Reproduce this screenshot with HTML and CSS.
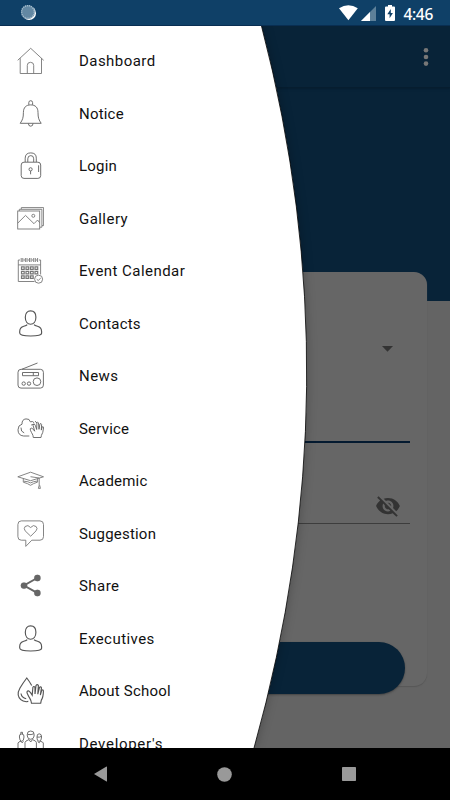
FILE: index.html
```html
<!DOCTYPE html>
<html lang="en">
  <head>
    <meta charset="UTF-8" />
    <meta name="viewport" content="width=device-width, initial-scale=1" />
    <title>School App</title>
    <link rel="stylesheet" href="styles.css">
  </head>
  <body>
    <header class="status">
      <svg class="sync" width="18" height="18" viewBox="0 0 18 18">
        <circle cx="9.1" cy="9.2" r="6.9" fill="#fff" />
        <circle cx="7.9" cy="8" r="6.9" fill="#6388a3" />
        <circle cx="7.9" cy="8" r="6.3" fill="none" stroke="#a9bfce" stroke-width="1.4" stroke-dasharray="1 1" />
      </svg>
      <div class="status-right">
        <svg width="19" height="16" viewBox="0 0 19 16"><path d="M0 3.3Q9.4-2.6 18.8 3.3L9.4 15.3Z" fill="#fff" /></svg>
        <svg class="signal" width="15" height="15" viewBox="0 0 15 15">
          <path d="M0 15L15 0V15Z" fill="#5d8099" />
          <path d="M0 15L9 6V15Z" fill="#fff" />
        </svg>
        <svg class="battery" width="10" height="16" viewBox="0 0 10 16">
          <path d="M3 0H7V1.5H9Q10 1.5 10 2.5V15Q10 16 9 16H1Q0 16 0 15V2.5Q0 1.5 1 1.5H3Z" fill="#fff" />
          <path d="M5.8 4L2.3 9.3H4.6V13.3L7.9 8H5.8Z" fill="#0f4067" />
        </svg>
        <span class="clock">4:46</span>
      </div>
    </header>

    <main class="screen">
      <div class="appbar">
        <svg width="6" height="20" viewBox="0 0 6 20" fill="#777"><circle cx="3" cy="3.3" r="2.3" /><circle cx="3" cy="10" r="2.3" /><circle cx="3" cy="16.6" r="2.3" /></svg>
      </div>
      <div class="card">
        <div class="field select">
          <svg width="11" height="6" viewBox="0 0 11 6"><path d="M0 0H11L5.5 5.7Z" fill="#333" /></svg>
        </div>
        <div class="field user"></div>
        <div class="field password">
          <svg width="26" height="26" viewBox="0 0 24 24" fill="#333"><path d="M12 7c2.76 0 5 2.24 5 5 0 .65-.13 1.26-.36 1.83l2.92 2.92c1.51-1.26 2.7-2.89 3.43-4.75-1.73-4.39-6-7.5-11-7.5-1.4 0-2.74.25-3.98.7l2.16 2.16C10.74 7.13 11.35 7 12 7zM2 4.27l2.28 2.28.46.46C3.08 8.3 1.78 10.02 1 12c1.73 4.39 6 7.5 11 7.5 1.55 0 3.03-.3 4.38-.84l.42.42L19.73 22 21 20.73 3.27 3 2 4.27zM7.53 9.8l1.55 1.55c-.05.21-.08.43-.08.65 0 1.66 1.34 3 3 3 .22 0 .44-.03.65-.08l1.55 1.55c-.67.33-1.41.53-2.2.53-2.76 0-5-2.24-5-5 0-.79.2-1.53.53-2.2zm4.31-.78l3.15 3.15.02-.16c0-1.66-1.34-3-3-3l-.17.01z" /></svg>
        </div>
        <div class="submit"></div>
      </div>

      <nav class="drawer">
        <svg class="drawer-shape" width="330" height="722" viewBox="0 0 330 722">
          <path d="M0 0H261.5Q355.5 360 254 722H0Z" fill="#fff" />
          <path d="M261.5 0Q355.5 360 254 722" fill="none" stroke="#000" stroke-width=".8" />
        </svg>
        <ul class="menu">
          <li>
            <svg class="icon" viewBox="0 0 27 27"><path d="M.7 13.3L13.7 1.3L26.7 13.3M3.2 11.2V26.5H24.5V11.2M10.3 26.5V18.3Q10.3 15.3 13.5 15.3T16.7 18.3V26.5" /></svg>
            <span>Dashboard</span>
          </li>
          <li>
            <svg class="icon dark" viewBox="0 0 27 27"><path d="M11.8 4.8V2.6A1.9 1.9 0 0 1 15.6 2.6V4.8M3.2 23.3C5.5 20 6.4 18 6.4 12.5C6.4 7.5 9 4.9 13.7 4.9S21 7.5 21 12.5C21 18 21.9 20 24.2 23.3ZM11.4 23.5Q11.4 26.2 13.7 26.2T16 23.5" /></svg>
            <span class="narrow">Notice</span>
          </li>
          <li>
            <svg class="icon dark" viewBox="0 0 27 27"><rect x="4.2" y="10.2" width="19.5" height="16.2" rx="2.8" /><path d="M8.2 10V6.2Q8.2.9 13.8.9T19.3 6.2V10M10.8 10V6.8Q10.8 3.6 13.8 3.6T16.7 6.8V10M13.6 19V22.3M21.6 13.3V20" /><circle cx="13.6" cy="17.3" r="1.6" /></svg>
            <span class="narrow">Login</span>
          </li>
          <li>
            <svg class="icon" viewBox="0 0 27 27"><rect x=".7" y="6" width="22" height="18" /><path d="M2.3 6V4.3H24.9V22.2H22.9M4.3 4.2V2.6H26.6V20.6H25M.7 18.2L8.5 10.4L17 18.7L20.6 15L22.7 17.8" /><circle cx="16.3" cy="10.8" r="1.5" /></svg>
            <span>Gallery</span>
          </li>
          <li>
            <svg class="icon" viewBox="0 0 27 27"><path d="M17.5 24.5H1.3V3H3M22 3H23.6V17.5M1.3 7.9H23.6" /><path d="M4.2 1V5M5.8 1V5M8.4 1V5M10 1V5M12.5 1V5M14.1 1V5M16.7 1V5M18.3 1V5M20.6 1V5M6.4 3H8M10.6 3H12M14.7 3H16.2M18.8 3H20.2" /><path d="M4.5 9.8H7.2V12.4H4.5ZM9 9.8H11.7V12.4H9ZM13.5 9.8H16.2V12.4H13.5ZM18 9.8H20.7V12.4H18ZM4.5 14.3H7.2V16.9H4.5ZM9 14.3H11.7V16.9H9ZM13.5 14.3H16.2V16.9H13.5ZM18 14.3H20.7V16.9H18ZM4.5 18.8H7.2V21.4H4.5ZM9 18.8H11.7V21.4H9ZM13.5 18.8H16.2V21.4H13.5Z" stroke-width="1.2" /><circle cx="21.6" cy="22.2" r="4" fill="#fff" /><path d="M19.7 22.2L21.2 23.5L23.7 21.2" /></svg>
            <span>Event Calendar</span>
          </li>
          <li>
            <svg class="icon user-icon" viewBox="0 0 27 27"><path d="M13.6.8C16.9.8 18.9 3.2 18.9 7.2C18.9 11.6 16.6 14.2 13.6 14.2S8.3 11.6 8.3 7.2C8.3 3.2 10.3.8 13.6.8ZM10.2 14.6Q9.6 15.5 6.8 16.3Q2.7 17.4 2.7 21.5V23Q2.7 26 13.7 26T24.6 23V21.5Q24.6 17.4 20.5 16.3Q17.7 15.5 17.1 14.6" /></svg>
            <span class="narrow">Contacts</span>
          </li>
          <li>
            <svg class="icon dark" viewBox="0 0 27 27"><rect x="1" y="7.3" width="25.4" height="18.8" rx="3" /><path d="M5 7.2L20.5 1M5.5 10.5H21.5V13.7H5.5ZM16.3 10.5V13.7" /><circle cx="6.7" cy="21.6" r="1.7" /><circle cx="12" cy="21.6" r="1.7" /><circle cx="20" cy="19.7" r="3.8" /></svg>
            <span>News</span>
          </li>
          <li>
            <svg class="icon dark" viewBox="0 0 27 27"><path d="M12.3 21H6.6Q1 20.5 1 14.8Q1 10 5 9.2Q4.8 4.3 9 3.9Q12.7 3.5 13.3 6.8Q15.7 5.8 17.2 7.8M4 12.6Q3.6 16.8 7.2 17.9M14.2 10L17 9.2M18 6.2L20 8M16.3 22.5C16.1 19.3 14.8 18.6 13.6 15.7Q12.5 13.4 14.1 13Q15.4 12.8 17.7 16.2L16.1 10.5Q16 8.8 17.3 9Q18.3 9.4 19.7 14.5L19.9 7.8Q20.3 6.4 21.5 7.8L22 14.3L22.9 9.1Q24 7.7 24.6 9.4L24.3 15.1L25.2 11.8Q26.7 11.3 26.5 13Q26.1 18 24.4 20.4L24 22.5Z" /></svg>
            <span class="narrow">Service</span>
          </li>
          <li>
            <svg class="icon" viewBox="0 0 27 27"><path d="M.8 9.8L13.6 5.2L26.5 9.8L13.6 13.7ZM6.3 11.5V15.2Q11 16.5 13.5 18.3Q16.2 16.5 20.6 15.1V11.5M7 14.2Q11.5 14.5 13.6 15.9Q16 14.5 20 14.1M13.5 9.7L22.2 11V18.2L21.4 21.4H23.4L22.7 18.2" /></svg>
            <span class="narrow">Academic</span>
          </li>
          <li>
            <svg class="icon" viewBox="0 0 27 27"><path d="M4.3.9H23Q26.5.9 26.5 4.5V16.7Q26.5 20.2 23 20.2H14.8L8.8 26.4V20.2H4.3Q.9 20.2.9 16.7V4.5Q.9.9 4.3.9ZM13.7 16.2L8.1 10.8Q6.4 8.5 8.1 6.5Q11 4.2 13.6 7.5Q16.4 4.2 19.1 6.5Q21 8.5 19.1 10.8Z" /></svg>
            <span class="narrow">Suggestion</span>
          </li>
          <li>
            <svg class="icon share" viewBox="0 0 27 27"><path d="M20.2 6L7 13.5L20.2 20.9" /><circle cx="20.4" cy="6" r="3.2" /><circle cx="7" cy="13.6" r="3.2" /><circle cx="20.4" cy="21" r="3.2" /></svg>
            <span>Share</span>
          </li>
          <li>
            <svg class="icon user-icon" viewBox="0 0 27 27"><path d="M13.6.8C16.9.8 18.9 3.2 18.9 7.2C18.9 11.6 16.6 14.2 13.6 14.2S8.3 11.6 8.3 7.2C8.3 3.2 10.3.8 13.6.8ZM10.2 14.6Q9.6 15.5 6.8 16.3Q2.7 17.4 2.7 21.5V23Q2.7 26 13.7 26T24.6 23V21.5Q24.6 17.4 20.5 16.3Q17.7 15.5 17.1 14.6" /></svg>
            <span>Executives</span>
          </li>
          <li>
            <svg class="icon user-icon" viewBox="0 0 27 27"><path d="M14.7 8.5Q12.5 4.5 9.8 1Q5.8 6.2 3 11Q.7 15 1.2 18Q2.3 24 9.3 24.7L11.3 24.4M4 16.5Q4.6 20.7 9.2 21.7M14.5 26.2C14.2 22.3 12.7 21.8 11 18Q8.9 14.5 11 13.9Q12.5 13.6 15.2 18.2L15.9 10.3Q16.8 8.6 18 10.3L18 17L19 8.5Q20.3 6.8 21.4 8.5L20.8 17.2L22.5 10.3Q24 9.2 24.5 10.8L23.3 18L24.8 13.2Q26.4 12.2 26.4 14.2Q26.3 20.3 24.3 23.2L23.7 26.2Z" /></svg>
            <span class="narrow">About School</span>
          </li>
          <li>
            <svg class="icon dark" viewBox="0 0 27 27"><path d="M10.3 4.5Q10 1 13.7 1T17.1 4.5V6Q16.7 9.3 13.7 9.3T10.3 6ZM10.5 4.5Q14.5 5 16.8 3.8M2.4 7Q2 4 4.7 4T7 7Q6.8 11.3 4.7 11.3T2.4 7ZM3.8 4V2.3H5.5V4M20 7Q19.8 3.8 22.2 3.8T24.6 7Q24.4 11.3 22.2 11.3T20 7ZM20 7Q22.4 7.7 24.5 6.3M8 18V12.5Q8 11 12 9.6L13.7 12L15.5 9.6Q19.4 11 19.4 12.5V18M1 18V13Q1.4 11.8 4 11.2L5 12.8L6.6 11.3M20.5 11.3L22.2 12.8L23.3 11.3Q26 11.8 26.3 13V18" /></svg>
            <span class="wide">Developer's</span>
          </li>
        </ul>
      </nav>
    </main>

    <footer class="navbar">
      <svg width="13" height="16" viewBox="0 0 13 16"><path d="M0 8L12.5.5Q13 .4 13 1V15Q13 15.6 12.5 15.5Z" /></svg>
      <svg width="15" height="15" viewBox="0 0 15 15"><circle cx="7.5" cy="7.5" r="7.3" /></svg>
      <svg width="14" height="14" viewBox="0 0 14 14"><rect width="14" height="14" rx=".7" /></svg>
    </footer>
  </body>
</html>
```

FILE: styles.css
```css
* {
  box-sizing: border-box;
}
body {
  margin: 0;
  height: 800px;
  display: flex;
  flex-direction: column;
  font-family: Roboto, sans-serif;
  overflow: hidden;
}
svg {
  display: block;
  flex: none;
}
.status {
  height: 26px;
  flex: none;
  background: #0f4067;
  border-bottom: 1px solid #092e52;
  display: flex;
  justify-content: space-between;
  padding: 4px 17px 0 20px;
}
.status-right {
  display: flex;
  align-items: flex-start;
  padding-top: 1px;
}
.signal {
  margin: 1px 9px 0 3px;
}
.clock {
  color: #fff;
  font-family: "Noto Sans", sans-serif;
  font-size: 15.5px;
  font-weight: 500;
  line-height: 18px;
  letter-spacing: -0.3px;
  margin-left: 8px;
}
.screen {
  position: relative;
  height: 722px;
  overflow: hidden;
  background: linear-gradient(#082338 275px, #646464 275px);
}
.appbar {
  height: 62px;
  display: flex;
  justify-content: flex-end;
  align-items: center;
  padding-right: 21px;
  border-bottom: 1px solid #061d2f;
  box-shadow: 0 1px 2px #061d2f;
}
.card {
  width: 404px;
  height: 414px;
  margin: 184px 23px 0;
  padding: 20px 17px 0 23px;
  background: #666;
  border-radius: 13px;
  box-shadow: 0 1px 1px #575757;
}
.field {
  display: flex;
  justify-content: flex-end;
}
.select {
  height: 70px;
  padding: 54px 17px 0 0;
}
.user {
  height: 81px;
  border-bottom: 2px solid #041a30;
}
.password {
  height: 81px;
  padding: 50px 9px 0 0;
  border-bottom: 1px solid #3d3d3d;
}
.submit {
  height: 52px;
  margin: 118px 5px 0 0;
  background: #082338;
  border-radius: 26px;
  box-shadow: 0 1px 2px #444;
}
.drawer {
  position: absolute;
  inset: 0;
}
.drawer-shape {
  position: absolute;
  top: 0;
  left: 0;
  filter: drop-shadow(1px 0 5px rgba(0, 0, 0, 0.2));
}
.menu {
  position: relative;
  list-style: none;
  margin: 0;
  padding: 8.5px 0 0 17px;
}
.menu li {
  height: 52.5px;
  display: flex;
  align-items: center;
  gap: 35px;
  color: #111;
  font-size: 15px;
  letter-spacing: 0.45px;
}
.menu span {
  padding-top: 1px;
}
.narrow {
  letter-spacing: 0.2px;
}
.wide {
  letter-spacing: 0.7px;
}
.icon {
  width: 27px;
  height: 27px;
  fill: none;
  stroke: #777;
  stroke-width: 0.9;
}
.icon.dark {
  stroke: #606060;
}
.icon.user-icon {
  stroke: #555;
  stroke-width: 1.15;
}
.icon.share {
  fill: #666;
  stroke: #666;
  stroke-width: 0.2;
}
.icon.share path {
  fill: none;
  stroke-width: 2;
}
.navbar {
  height: 52px;
  flex: none;
  background: #000;
  fill: #999;
  display: flex;
  justify-content: space-between;
  align-items: center;
  padding: 0 94px;
}
```
